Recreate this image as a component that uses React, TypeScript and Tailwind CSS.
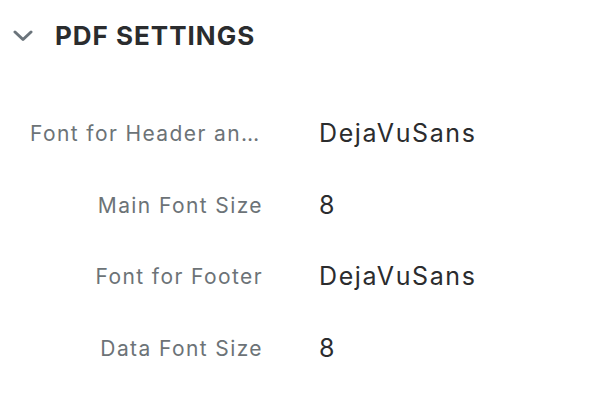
import React from 'react';

const rows = [
  { label: 'Font for Header and Body', value: 'DejaVuSans' },
  { label: 'Main Font Size', value: '8' },
  { label: 'Font for Footer', value: 'DejaVuSans' },
  { label: 'Data Font Size', value: '8' },
];

export default function App() {
  return (
    <div className="h-[408px] w-[614px] bg-white font-['Inter',sans-serif]">
      <div className="flex h-[72px] items-center pl-[13px] pb-[1px]">
        <svg width="20" height="12" viewBox="0 0 20 12" className="mr-[22px]">
          <path d="M2 2 L10 9.5 L18 2" fill="none" stroke="#6b747b" strokeWidth="3" strokeLinecap="round" strokeLinejoin="round" />
        </svg>
        <h2 className="text-[26px] font-bold tracking-[1px] text-[#2a2c2e]">PDF SETTINGS</h2>
      </div>
      <div className="mt-[26px] flex flex-col">
        {rows.map((r) => (
          <div key={r.label} className="flex h-[71.5px] items-center">
            <div className="w-[263px] shrink-0 truncate pl-[30px] text-right text-[21px] tracking-[1.4px] text-[#6c7377]">
              {r.label}
            </div>
            <div className="pl-[56px] text-[25px] tracking-[1.6px] text-[#2b2c2e]">{r.value}</div>
          </div>
        ))}
      </div>
    </div>
  );
}
